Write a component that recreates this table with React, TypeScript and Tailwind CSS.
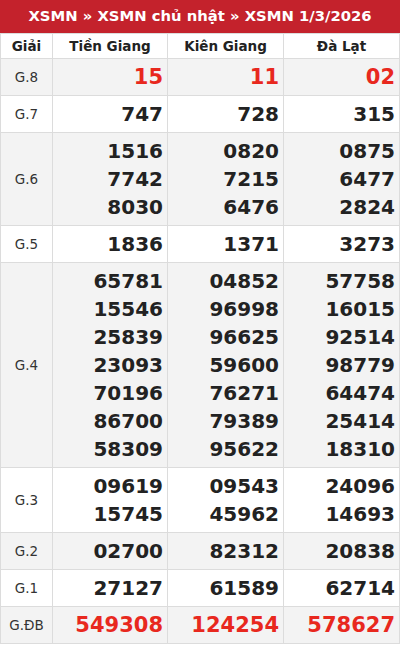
import React from "react";

type Row = { label: string; values: string[][]; red?: boolean };

const provinces = ["Tiền Giang", "Kiên Giang", "Đà Lạt"];

const rows: Row[] = [
  { label: "G.8", values: [["15"], ["11"], ["02"]], red: true },
  { label: "G.7", values: [["747"], ["728"], ["315"]] },
  {
    label: "G.6",
    values: [
      ["1516", "7742", "8030"],
      ["0820", "7215", "6476"],
      ["0875", "6477", "2824"],
    ],
  },
  { label: "G.5", values: [["1836"], ["1371"], ["3273"]] },
  {
    label: "G.4",
    values: [
      ["65781", "15546", "25839", "23093", "70196", "86700", "58309"],
      ["04852", "96998", "96625", "59600", "76271", "79389", "95622"],
      ["57758", "16015", "92514", "98779", "64474", "25414", "18310"],
    ],
  },
  {
    label: "G.3",
    values: [
      ["09619", "15745"],
      ["09543", "45962"],
      ["24096", "14693"],
    ],
  },
  { label: "G.2", values: [["02700"], ["82312"], ["20838"]] },
  { label: "G.1", values: [["27127"], ["61589"], ["62714"]] },
  { label: "G.ĐB", values: [["549308"], ["124254"], ["578627"]], red: true },
];

export default function App() {
  return (
    <div
      className="w-[400px] bg-white"
      style={{ fontFamily: '"DejaVu Sans", Verdana, sans-serif' }}
    >
      <div className="h-[33px] bg-[#c4222c] flex items-center justify-center text-white font-bold text-[14.8px]">
        XSMN » XSMN chủ nhật » XSMN 1/3/2026
      </div>
      <table className="w-full border-collapse border border-[#dcdcdc] table-fixed">
        <colgroup>
          <col className="w-[52px]" />
          <col className="w-[115px]" />
          <col className="w-[116px]" />
          <col />
        </colgroup>
        <thead>
          <tr className="h-[25px] bg-white">
            <th className="border border-[#dcdcdc] text-[13.5px] font-bold text-[#222] p-0">
              Giải
            </th>
            {provinces.map((p) => (
              <th
                key={p}
                className="border border-[#dcdcdc] text-[13.5px] font-bold text-[#222] p-0"
              >
                {p}
              </th>
            ))}
          </tr>
        </thead>
        <tbody>
          {rows.map((r, i) => (
            <tr key={r.label} className={i % 2 === 0 ? "bg-[#f3f3f3]" : "bg-white"}>
              <td className="border border-[#dcdcdc] text-center text-[13.5px] text-[#333] p-0">
                {r.label}
              </td>
              {r.values.map((vals, j) => (
                <td
                  key={j}
                  className="border border-[#dcdcdc] text-right pr-[4px] py-[4px]"
                >
                  {vals.map((v) => (
                    <div
                      key={v}
                      className={
                        r.red
                          ? "text-[21px] leading-[28px] font-bold text-[#e8281e]"
                          : "text-[20px] leading-[28px] font-bold text-[#222]"
                      }
                    >
                      {v}
                    </div>
                  ))}
                </td>
              ))}
            </tr>
          ))}
        </tbody>
      </table>
    </div>
  );
}
